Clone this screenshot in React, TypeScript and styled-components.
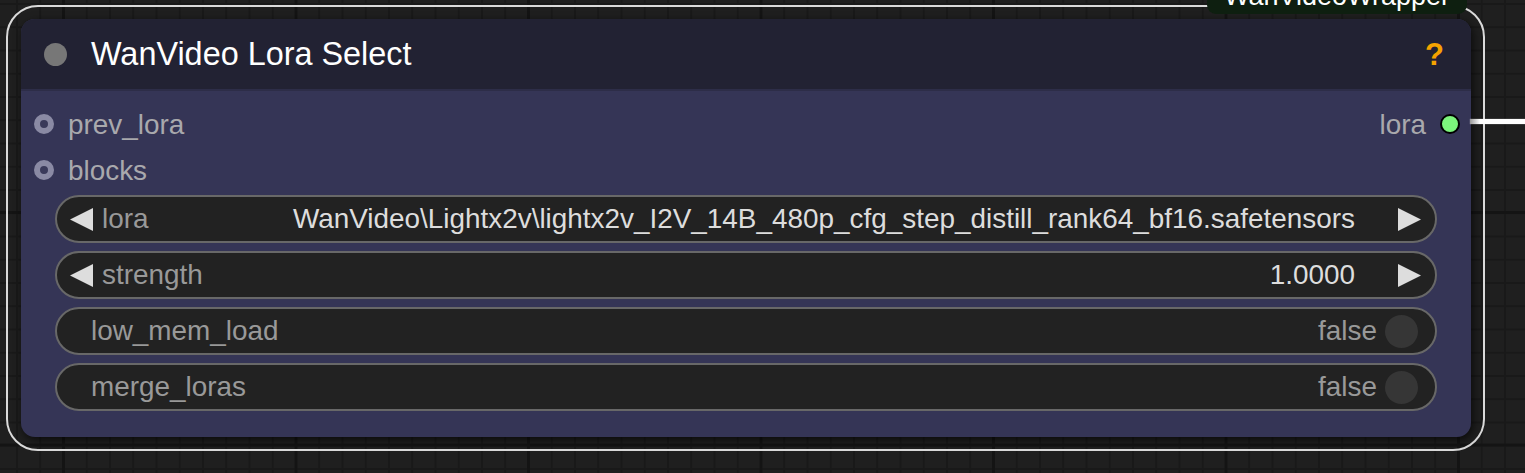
import React from "react";
import styled, { createGlobalStyle } from "styled-components";

const Global = createGlobalStyle`
  html, body { margin: 0; padding: 0; }
  body {
    width: 1525px;
    height: 473px;
    overflow: hidden;
    font-family: "Liberation Sans", Arial, sans-serif;
    background-color: #1f1f1f;
    background-image:
      linear-gradient(to right, #141414 3px, transparent 3px),
      linear-gradient(to bottom, #141414 3px, transparent 3px),
      linear-gradient(to right, #191919 2px, transparent 2px),
      linear-gradient(to bottom, #191919 2px, transparent 2px);
    background-size: 232.5px 232.5px, 232.5px 232.5px, 23.25px 23.25px, 23.25px 23.25px;
    background-position: 62px 0, 0 211px, 16px 0, 0 3px;
  }
`;

const Canvas = styled.div`
  position: relative;
  width: 1525px;
  height: 473px;
  padding: 5px 0 0 6px;
  box-sizing: border-box;
`;

const Selection = styled.div`
  display: inline-flex;
  border: 2px solid #dadada;
  border-radius: 32px;
  padding: 12px 12px 12px 13px;
`;

const Node = styled.div`
  width: 1450px;
  border-radius: 14px;
  background: #353556;
  box-shadow: 2px 3px 10px rgba(0, 0, 0, 0.65);
  display: flex;
  flex-direction: column;
`;

const TitleBar = styled.div`
  height: 70px;
  border-bottom: 2px solid #2d2d48;
  background: #222233;
  border-radius: 14px 14px 0 0;
  display: flex;
  align-items: center;
  padding: 0 27px 0 23px;
`;

const TitleDot = styled.div`
  width: 23px;
  height: 23px;
  border-radius: 50%;
  background: #777;
  flex: none;
`;

const TitleText = styled.div`
  margin-left: 24px;
  font-size: 32.4px;
  color: #fff;
  flex: 1;
`;

const Help = styled.div`
  font-size: 31px;
  font-weight: bold;
  color: #f5a300;
  padding-top: 2px;
`;

const Body = styled.div`
  display: flex;
  flex-direction: column;
  padding: 10px 0 26px;
`;

const SlotRow = styled.div`
  height: 46px;
  display: flex;
  align-items: center;
  padding: 0 11px 0 13px;
`;

const InputDot = styled.div`
  width: 20px;
  height: 20px;
  border-radius: 50%;
  box-sizing: border-box;
  border: 6.5px solid #8a8aa4;
  background: #3a3a5a;
  flex: none;
`;

const SlotLabel = styled.div<{ $right?: boolean }>`
  font-size: 27.9px;
  color: #a9a9ad;
  margin-left: ${(p) => (p.$right ? "auto" : "14px")};
  margin-right: ${(p) => (p.$right ? "14px" : "0")};
  padding-top: 2px;
`;

const OutputDot = styled.div`
  width: 20px;
  height: 20px;
  border-radius: 50%;
  box-sizing: border-box;
  border: 2.5px solid #000;
  background: #7cf57c;
  flex: none;
`;

const Widgets = styled.div`
  display: flex;
  flex-direction: column;
  gap: 8px;
  margin-top: 2px;
  padding: 0 34px;
`;

const Pill = styled.div<{ $toggle?: boolean }>`
  height: 48px;
  box-sizing: border-box;
  border: 2px solid #686868;
  border-radius: 24px;
  background: #222;
  display: flex;
  align-items: center;
  padding: ${(p) => (p.$toggle ? "0 17px 0 34px" : "0 14px 0 13px")};
  font-size: 27.9px;
`;

const Arrow = styled.svg`
  width: 23px;
  height: 23px;
  flex: none;
`;

const WidgetLabel = styled.div`
  color: #999;
  margin-left: 9px;
`;

const ToggleLabel = styled.div`
  color: #999;
`;

const WidgetValue = styled.div`
  color: #ddd;
  margin-left: auto;
  margin-right: 43px;
  white-space: nowrap;
`;

const ToggleValue = styled.div`
  color: #999;
  margin-left: auto;
  margin-right: 8px;
`;

const Knob = styled.div`
  width: 33px;
  height: 33px;
  border-radius: 50%;
  background: #363636;
  flex: none;
`;

const Wire = styled.div`
  position: absolute;
  left: 1470px;
  top: 119px;
  width: 60px;
  height: 5px;
  background: linear-gradient(to right, #9a9a9a 0px, #fff 10px, #fff 100%);
  box-shadow: 0 0 1px rgba(255, 255, 255, 0.6);
`;

const GroupTab = styled.div`
  position: absolute;
  left: 1207px;
  top: -20px;
  width: 260px;
  height: 34px;
  box-sizing: border-box;
  padding-top: 3px;
  background: #0e1f10;
  border-radius: 0 0 9px 9px;
  color: #fff;
  font-size: 27px;
  line-height: 1;
  text-align: center;
  overflow: hidden;
`;

const LeftArrow = () => (
  <Arrow viewBox="0 0 23 23">
    <polygon points="0,11.5 23,0 23,23" fill="#ddd" />
  </Arrow>
);

const RightArrow = () => (
  <Arrow viewBox="0 0 23 23">
    <polygon points="23,11.5 0,0 0,23" fill="#ddd" />
  </Arrow>
);

const ComboWidget = ({ label, value }: { label: string; value: string }) => (
  <Pill>
    <LeftArrow />
    <WidgetLabel>{label}</WidgetLabel>
    <WidgetValue>{value}</WidgetValue>
    <RightArrow />
  </Pill>
);

const ToggleWidget = ({ label, value }: { label: string; value: string }) => (
  <Pill $toggle>
    <ToggleLabel>{label}</ToggleLabel>
    <ToggleValue>{value}</ToggleValue>
    <Knob />
  </Pill>
);

export default function App() {
  return (
    <>
      <Global />
      <Canvas>
        <Selection>
          <Node>
            <TitleBar>
              <TitleDot />
              <TitleText>WanVideo Lora Select</TitleText>
              <Help>?</Help>
            </TitleBar>
            <Body>
              <SlotRow>
                <InputDot />
                <SlotLabel>prev_lora</SlotLabel>
                <SlotLabel $right>lora</SlotLabel>
                <OutputDot />
              </SlotRow>
              <SlotRow>
                <InputDot />
                <SlotLabel>blocks</SlotLabel>
              </SlotRow>
              <Widgets>
                <ComboWidget
                  label="lora"
                  value="WanVideo\Lightx2v\lightx2v_I2V_14B_480p_cfg_step_distill_rank64_bf16.safetensors"
                />
                <ComboWidget label="strength" value="1.0000" />
                <ToggleWidget label="low_mem_load" value="false" />
                <ToggleWidget label="merge_loras" value="false" />
              </Widgets>
            </Body>
          </Node>
        </Selection>
        <Wire />
        <GroupTab>WanVideoWrapper</GroupTab>
      </Canvas>
    </>
  );
}
